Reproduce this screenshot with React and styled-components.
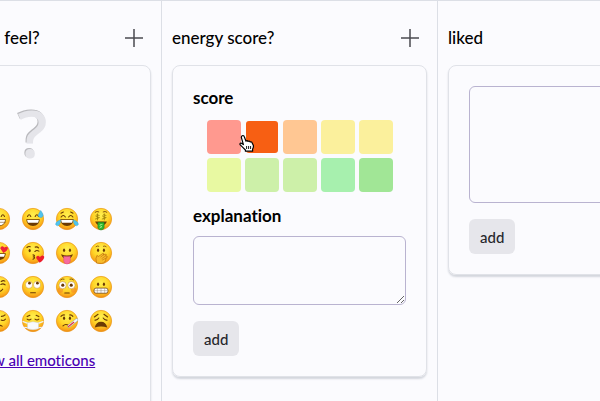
import { useLayoutEffect, useRef, useState } from "react";
import styled, { createGlobalStyle } from "styled-components";

const scores = [
    '#ff998f', '#f75f13', '#ffc793', '#fbf09c', '#fbf09c',
    '#e8f9a2', '#cdf0a9', '#cdf0a9', '#a7f0ae', '#a1e696',
];

const emoticons = [
    'smile', 'grin', 'sweat', 'joy', 'money',
    'smile', 'hearts', 'kiss', 'tongue', 'hand',
    'smile', 'smirk', 'rolling', 'flushed', 'grimace',
    'smile', 'pensive', 'mask', 'thermometer', 'weary',
];

const brown = '#6b3a05';
const line = { fill: 'none', stroke: brown, strokeWidth: 1.2, strokeLinecap: 'round' };

const HappyEyes = () => <path {...line} d="M6 9.2Q7.8 5.6 9.6 9.2M14.4 9.2Q16.2 5.6 18 9.2" />;
const DotEyes = () => (
    <g fill={brown}>
        <ellipse cx="8.8" cy="9" rx="1.2" ry="1.8" />
        <ellipse cx="15.2" cy="9" rx="1.2" ry="1.8" />
    </g>
);
const Teeth = () => (
    <g>
        <path fill={brown} d="M4.6 12.4H19.4Q18.8 19.6 12 19.6T4.6 12.4Z" />
        <path fill="#fff" d="M5.6 13.2H18.4L17.6 16H6.4Z" />
    </g>
);

const features = {
    smile: <><DotEyes /><path {...line} d="M6.5 14Q12 19 17.5 14" /></>,
    grin: (
        <>
            <HappyEyes />
            <path fill="#fff" stroke={brown} strokeWidth=".8" d="M4.8 12.6H19.2Q18.4 19.4 12 19.4T4.8 12.6Z" />
            <path {...line} strokeWidth=".6" d="M5.4 15.6H18.6" />
        </>
    ),
    sweat: (
        <>
            <HappyEyes />
            <Teeth />
            <path fill="#4fc3ee" stroke="#2a9fd0" strokeWidth=".4" d="M20.4 2.6Q23.8 7 22.8 9A2.8 2.8 0 0 1 17.6 8.2Q18.2 5.6 20.4 2.6Z" />
        </>
    ),
    joy: (
        <>
            <path {...line} d="M5.6 9.8Q8 6.4 10.2 9.8M13.8 9.8Q16 6.4 18.4 9.8M5.4 5.6L8 4.4M18.6 5.6L16 4.4" />
            <Teeth />
            <path fill="#4fc3ee" stroke="#2a9fd0" strokeWidth=".4" d="M5.2 12.8Q4.8 19.2 1.4 19.4Q-1.6 18.6 .2 15.8Q1.6 14 5.2 12.8ZM18.8 12.8Q19.2 19.2 22.6 19.4Q25.6 18.6 23.8 15.8Q22.4 14 18.8 12.8Z" />
        </>
    ),
    money: (
        <>
            <path {...line} strokeWidth=".9" d="M5.6 4.6Q7.4 3 9.6 4.2M18.4 4.6Q16.6 3 14.4 4.2" />
            <path {...line} stroke="#9a7c08" strokeWidth=".9" d="M10 8Q6.4 6.6 6.4 8.4T9.4 10.2T6 12M8.2 6.4V13M17.4 8Q13.8 6.6 13.8 8.4T16.8 10.2T13.4 12M15.6 6.4V13" />
            <path fill={brown} d="M5.6 14.6H18.4Q17 19 12 19T5.6 14.6Z" />
            <path fill="#2eb52e" stroke="#11791c" strokeWidth=".5" d="M8.6 15.6H15.4V21.4Q15 24 12 24T8.6 21.4Z" />
            <path {...line} stroke="#b8f59c" strokeWidth=".8" d="M13.2 18Q10.4 17.4 11 19T13 20.4L10.8 21.6" />
        </>
    ),
    hearts: (
        <>
            <Teeth />
            <path fill="#ee2336" d="M7.2 12L2.4 8.4Q1.4 5.2 4 5L6.2 6.2Q8.6 3.4 10.4 5.6Q11 8.2 7.2 12ZM16.8 12L13.4 7.2Q13.4 4.4 16.2 4.6L17.8 6Q20.6 4 21.8 6.4Q21.8 9.4 16.8 12Z" />
        </>
    ),
    kiss: (
        <>
            <ellipse cx="8.4" cy="9.4" rx="1.2" ry="1.8" fill={brown} />
            <path {...line} d="M14 10.4Q16 8.4 18.4 10M5.4 6Q7 4.4 9 5.2M14.4 5.6Q16.6 4.8 18 6.4" />
            <path {...line} d="M12 14Q15 14.4 12.6 16.2Q15.2 17 12 18.8" />
            <path fill="#ed1d2d" d="M19.2 22.6L15.6 17.8Q15 15 17.8 15L19.6 16.4Q22 13.4 24.2 15.8Q24.8 19.2 19.2 22.6Z" />
        </>
    ),
    tongue: (
        <>
            <DotEyes />
            <path fill={brown} d="M5.6 13.4Q12 16.2 18.4 13.4Q17.2 18.6 12 18.6T5.6 13.4Z" />
            <path fill="#f76c9e" stroke="#d8447d" strokeWidth=".5" d="M8.4 15.6Q12 16.2 15.6 15.6V20.6Q15.2 24 12 24T8.4 20.6Z" />
        </>
    ),
    hand: (
        <>
            <DotEyes />
            <path {...line} strokeWidth=".8" d="M6.6 5Q8 3.8 9.6 4.6M17.6 5Q16.4 3.8 14.6 4.6" />
            <path fill="#f8bc2b" stroke="#b86b0b" strokeWidth=".7" strokeLinejoin="round" d="M7.2 23Q5.6 17.4 7.6 14.6L9.2 15.8L14.4 12.2Q16 12.6 14.4 14.2L17.4 13.2Q18.8 14 17 15.2L18.8 15.6Q19.4 17 17.4 17.6Q17.4 23 12.4 23.4Z" />
            <path {...line} stroke="#b86b0b" strokeWidth=".6" d="M14.4 14.2L11.8 16.4M17 15.2L13 18M17.4 17.6L13.6 19.6" />
        </>
    ),
    smirk: (
        <>
            <path {...line} d="M5.6 9.4Q7.4 8 9.6 9.4M14 9.2Q16.4 7.8 18.6 9.6M14.4 6Q16.6 4.4 18.4 5.6M9 17.2Q14 17.6 16 14.4" />
        </>
    ),
    rolling: (
        <>
            <circle cx="7.6" cy="9.6" r="3.9" fill="#fff" stroke="#c9851a" strokeWidth=".5" />
            <circle cx="16.4" cy="9.6" r="3.9" fill="#fff" stroke="#c9851a" strokeWidth=".5" />
            <circle cx="8.2" cy="7.8" r="1.5" fill={brown} />
            <circle cx="16.8" cy="7.8" r="1.5" fill={brown} />
            <path {...line} d="M9.4 18.2H14.6" />
        </>
    ),
    flushed: (
        <>
            <circle cx="4.8" cy="15.4" r="3" fill="#f0712c" opacity=".4" />
            <circle cx="19.2" cy="15.4" r="3" fill="#f0712c" opacity=".4" />
            <circle cx="7.2" cy="10" r="4" fill="#fff" stroke="#b57414" strokeWidth=".5" />
            <circle cx="16.8" cy="10" r="4" fill="#fff" stroke="#b57414" strokeWidth=".5" />
            <circle cx="7.4" cy="10" r="1.7" fill={brown} />
            <circle cx="16.6" cy="10" r="1.7" fill={brown} />
            <path {...line} strokeWidth=".9" d="M5 4.2Q6.6 2.6 8.8 3.4M19 4.2Q17.4 2.6 15.2 3.4" />
            <path {...line} d="M9.6 18.6H14.4" />
        </>
    ),
    grimace: (
        <>
            <DotEyes />
            <rect x="4.4" y="13.2" width="15.2" height="5.6" rx="2.2" fill="#fff" stroke={brown} strokeWidth=".8" />
            <path {...line} stroke="#8b8173" strokeWidth=".5" d="M5 16H19M8 13.6V18.4M12 13.6V18.4M16 13.6V18.4" />
        </>
    ),
    pensive: <path {...line} d="M5 10Q7.2 12.4 9.6 11M14.4 11Q17 12.4 19 10M14.6 7Q17 7 18.6 5.4M8.6 17.6Q12 15.6 15.4 17.6" />,
    mask: (
        <>
            <path {...line} d="M5.6 10Q7.8 11.6 9.8 10M14.2 10Q16.4 11.6 18.4 10M5.6 7.2L8.6 5.8M18.4 7.2L15.4 5.8" />
            <path fill="none" stroke="#eef2f7" strokeWidth="1.2" d="M.6 12.4L6.4 14.6M23.4 12.4L17.6 14.6M2.4 19L6.6 19.4M21.6 19L17.4 19.4" />
            <path fill="#f8fafc" stroke="#c5cbd3" strokeWidth=".5" d="M6 13.8L12 12.8L18 13.8V20.4Q12 22.6 6 20.4Z" />
        </>
    ),
    thermometer: (
        <>
            <DotEyes />
            <path {...line} d="M5.4 7Q7 5 9.4 5.4M18.4 7Q17 5 14.8 5.4M7.6 17.4Q10.4 14.4 14 17" />
            <path fill="none" stroke="#8da6bf" strokeWidth="3.2" strokeLinecap="round" d="M14 17.6L22.6 10.8" />
            <path fill="none" stroke="#f4f8fb" strokeWidth="2.2" strokeLinecap="round" d="M14 17.6L22.6 10.8" />
            <path fill="none" stroke="#e2313d" strokeWidth="1.3" strokeLinecap="round" d="M13.6 18L19.4 13.4" />
        </>
    ),
    weary: (
        <>
            <path {...line} d="M5.4 11Q8 11.4 9.6 8.8M18.6 11Q16 11.4 14.4 8.8M4.8 7.6L8.8 4.6M19.2 7.6L15.2 4.6" />
            <path fill={brown} d="M5.2 19.2Q6.6 12.8 12 12.8T18.8 19.2Q12 16.8 5.2 19.2Z" />
        </>
    ),
};

function Plus() {
    return (
        <svg width="18" height="18" viewBox="0 0 18 18" aria-hidden="true">
            <path d="M0 9H18M9 0V18" stroke="#4b4b50" strokeWidth="1.5" />
        </svg>
    );
}

function Pointer() {
    return (
        <Hand width="16" height="17" viewBox="0 0 16 17" aria-hidden="true">
            <path
                d="M3.2.8Q4.8.2 5.4 2L7 6.2Q8 5 9 6.4Q10.4 5.4 11.2 7Q12.8 6.4 13.2 8L14.4 10.6Q14.6 12.6 13.6 14V16.2H6.4V15L3.8 12.4L1 9.6Q.8 7.6 2.8 8.4L4.4 9.6L2.4 2.6Q2.2 1.2 3.2.8Z"
                fill="#fff" stroke="#000" strokeWidth="1.2" strokeLinejoin="round"
            />
            <path d="M7.6 11V14M9.6 11V14M11.6 11V14" stroke="#000" strokeWidth=".9" />
        </Hand>
    );
}

function ColumnHead({ title }) {
    return (
        <Head>
            <Title>{title}</Title>
            <IconButton aria-label={`new ${title}`}><Plus /></IconButton>
        </Head>
    );
}

export default function App() {
    const board = useRef(null);
    const [score, setScore] = useState(1);

    useLayoutEffect(() => {
        board.current.scrollLeft = 96;
    }, []);

    return (
        <>
            <GlobalStyle />
            <Board ref={board}>
                <Column $width={258}>
                    <ColumnHead title="how did we feel?" />
                    <Card>
                        <Unknown>?</Unknown>
                        <Emoticons>
                            {emoticons.map((name, i) => (
                                <Emoticon key={i} aria-label={name}>
                                    <svg width="22" height="22" viewBox="0 0 24 24" overflow="visible">
                                        <defs>
                                            <radialGradient id="skin" cx=".5" cy=".32" r=".7">
                                                <stop offset="0" stopColor="#fff04f" />
                                                <stop offset=".55" stopColor="#ffd326" />
                                                <stop offset=".85" stopColor="#f9a51a" />
                                                <stop offset="1" stopColor="#e87a10" />
                                            </radialGradient>
                                        </defs>
                                        <circle cx="12" cy="12" r="11.6" fill="url(#skin)" stroke="#eb9a1c" strokeWidth=".8" />
                                        {features[name]}
                                    </svg>
                                </Emoticon>
                            ))}
                        </Emoticons>
                        <More href="#emoticons">show all emoticons</More>
                    </Card>
                </Column>

                <Column $width={276}>
                    <ColumnHead title="energy score?" />
                    <Card>
                        <Label as="h3">score</Label>
                        <Scores>
                            {scores.map((color, i) => (
                                <Score key={i} $color={color} $active={i === score} aria-label={`score ${i + 1}`} onClick={() => setScore(i)}>
                                    {i === score && <Pointer />}
                                </Score>
                            ))}
                        </Scores>
                        <Label htmlFor="explanation">explanation</Label>
                        <TextArea id="explanation" $height={69} />
                        <AddButton>add</AddButton>
                    </Card>
                </Column>

                <Column $width={316}>
                    <ColumnHead title="liked" />
                    <Card>
                        <TextArea aria-label="liked" $height={117} />
                        <AddButton>add</AddButton>
                    </Card>
                </Column>
            </Board>
        </>
    );
}

const GlobalStyle = createGlobalStyle`
    * {
        box-sizing: border-box;
    }
    body {
        margin: 0;
        background: #fbfbfe;
        color: #000;
        font: 500 17px/24px Lato, "Liberation Sans", sans-serif;
        font-variant-ligatures: none;
    }
    button, textarea {
        font: inherit;
        color: inherit;
    }
`

const Board = styled.main`
    display: flex;
    height: 100vh;
    border-top: 1px solid #dcdfe6;
    overflow: auto;
    scrollbar-width: none;
`

const Column = styled.section`
    flex: none;
    width: ${(p) => p.$width}px;
    height: max-content;
    min-height: 100%;
    padding: 16px 10px;
    border-right: 1px solid #dcdfe6;
`

const Head = styled.header`
    display: flex;
    align-items: center;
    justify-content: space-between;
    height: 42px;
    margin-bottom: 6px;
    padding-right: 8px;
`

const Title = styled.h2`
    margin: 0;
    font-size: 17px;
    font-weight: 500;
`

const IconButton = styled.button`
    display: flex;
    padding: 0;
    border: 0;
    background: none;
`

const Card = styled.div`
    display: flex;
    flex-direction: column;
    align-items: flex-start;
    padding: 20px;
    border: 1px solid #e0e2e8;
    border-radius: 8px;
    box-shadow: 0 2px 2px #d3d6dd;
`

const Unknown = styled.div`
    align-self: center;
    height: 116px;
    color: #e5e5ea;
    font: 600 66px/92px "Open Sans", sans-serif;
    text-shadow: -1px -1px 0 #b9b9bd;
`

const Emoticons = styled.div`
    display: grid;
    grid-template-columns: repeat(5, 34px);
    align-self: center;
`

const Emoticon = styled.button`
    display: grid;
    place-items: center;
    height: 34px;
    padding: 0;
    border: 0;
    background: none;
`

const More = styled.a`
    align-self: center;
    margin: 10px 0 28px;
    color: #4a00b4;
    font-size: 15px;
`

const Label = styled.label`
    margin: 0 0 8px;
    font-size: 17px;
    font-weight: 700;
`

const Scores = styled.div`
    display: grid;
    grid-template-columns: repeat(5, 34px);
    gap: 4px;
    align-self: center;
    padding: 2px 0 12px;
`

const Score = styled.button`
    position: relative;
    height: 34px;
    padding: 0;
    border: ${(p) => (p.$active ? '1px solid transparent' : '0')};
    border-radius: 4px;
    background: ${(p) => p.$color} padding-box;
    cursor: pointer;
`

const Hand = styled.svg`
    position: absolute;
    top: 14px;
    left: -7px;
`

const TextArea = styled.textarea`
    width: 100%;
    height: ${(p) => p.$height}px;
    margin-bottom: 16px;
    padding: 8px;
    border: 1px solid #b9b3d0;
    border-radius: 6px;
    background: transparent;
    resize: vertical;
`

const AddButton = styled.button`
    height: 35px;
    padding: 0 11px;
    border: 0;
    border-radius: 6px;
    background: #e6e6eb;
    color: #26262b;
    font-size: 15px;
`
